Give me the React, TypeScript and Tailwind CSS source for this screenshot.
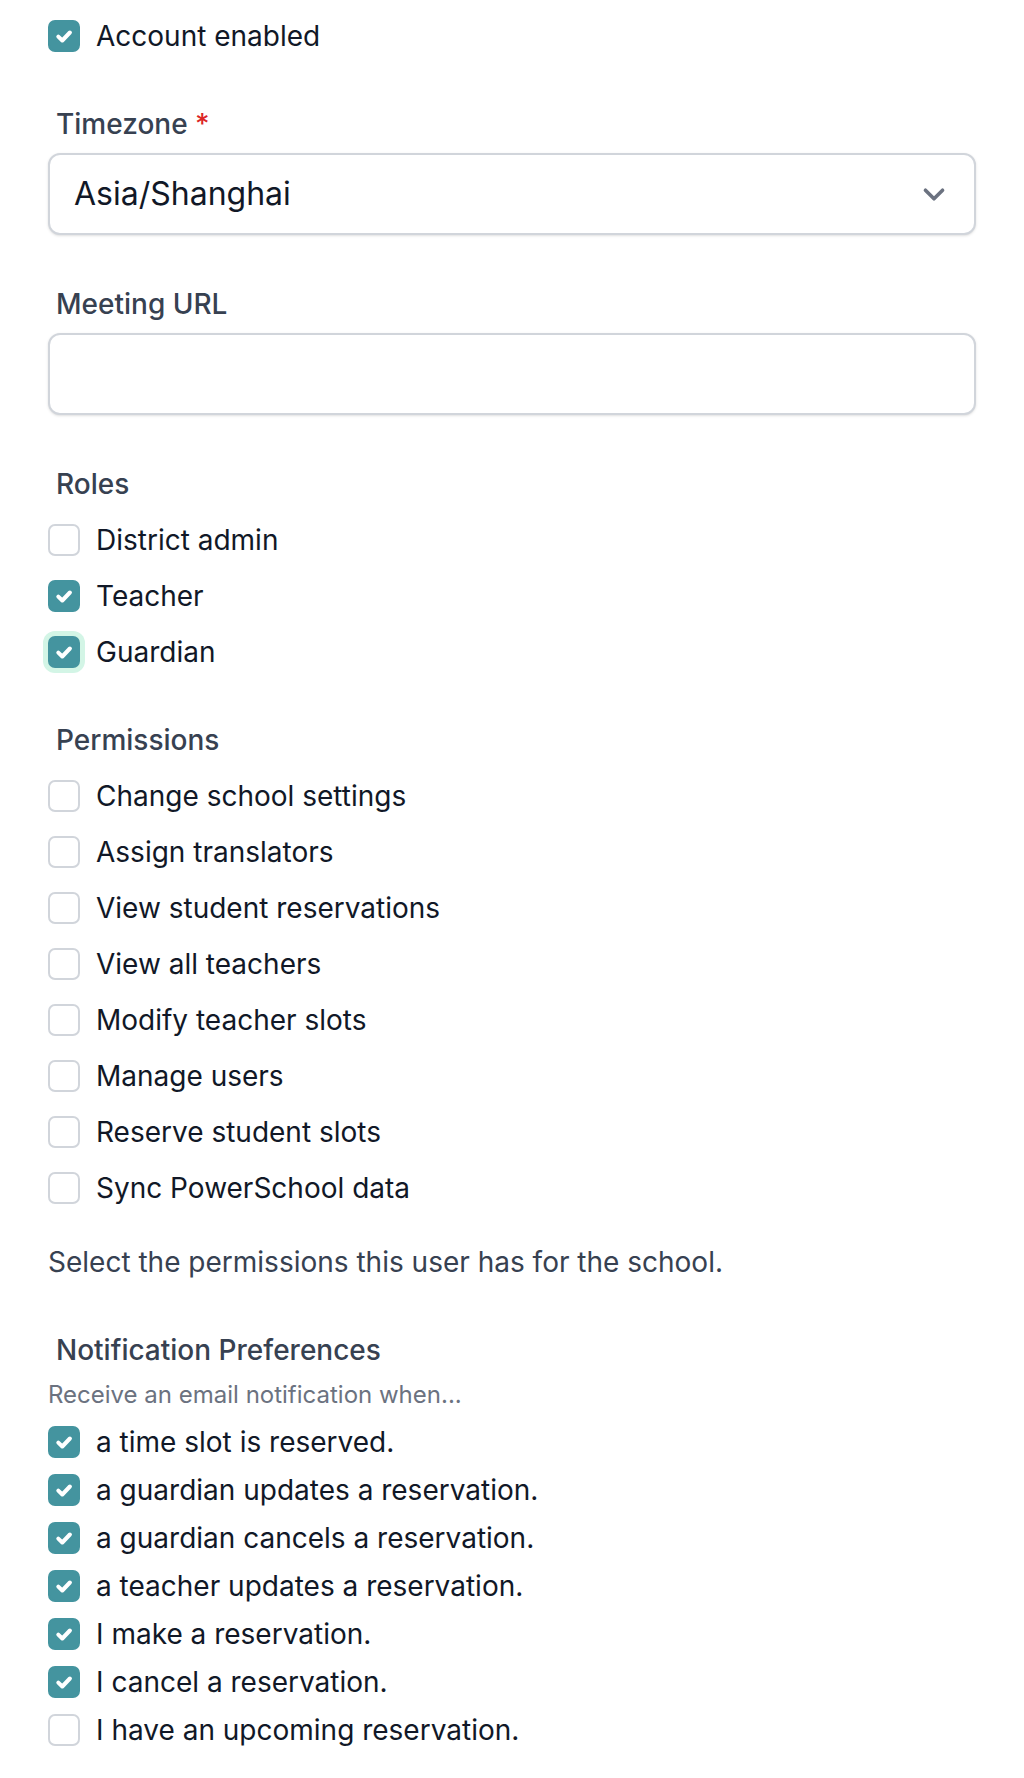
import React, { useState } from 'react';

const teal = 'bg-[#44949f] border-[#44949f]';

// check mark drawn inside the 28px content box of the checkbox
const Check = () => (
  <svg viewBox="0 0 28 28" className="w-7 h-7 shrink-0" fill="none" stroke="white" strokeWidth="4" strokeLinecap="round" strokeLinejoin="round">
    <path d="M8.3 14.6l4 3.9 7.6-8" />
  </svg>
);

interface BoxProps {
  checked: boolean;
  focused?: boolean;
  onToggle: () => void;
}

const Box = ({ checked, focused, onToggle }: BoxProps) => (
  <button
    type="button"
    onClick={onToggle}
    className={`w-8 h-8 shrink-0 rounded-[7px] border-2 flex items-center justify-center ${
      checked ? teal : 'bg-white border-[#d1d5db]'
    } ${focused ? 'ring-[5px] ring-[#d3f5e6] border-[#5eaeb8]' : ''}`}
  >
    {checked && <Check />}
  </button>
);

interface RowProps {
  label: string;
  checked: boolean;
  focused?: boolean;
  onToggle: () => void;
}

const CheckRow = ({ label, checked, focused, onToggle }: RowProps) => (
  <label className="flex items-center h-10 gap-4 cursor-pointer">
    <Box checked={checked} focused={focused} onToggle={onToggle} />
    <span className="text-[28px] leading-10 text-[#111827]">{label}</span>
  </label>
);

const SectionLabel = ({ children, className = '' }: { children: React.ReactNode; className?: string }) => (
  <div className={`pl-2 text-[28px] leading-10 font-medium text-[#374151] ${className}`}>{children}</div>
);

const roleList = ['District admin', 'Teacher', 'Guardian'];
const permissionList = [
  'Change school settings',
  'Assign translators',
  'View student reservations',
  'View all teachers',
  'Modify teacher slots',
  'Manage users',
  'Reserve student slots',
  'Sync PowerSchool data',
];
const notifyList = [
  'a time slot is reserved.',
  'a guardian updates a reservation.',
  'a guardian cancels a reservation.',
  'a teacher updates a reservation.',
  'I make a reservation.',
  'I cancel a reservation.',
  'I have an upcoming reservation.',
];

export default function App() {
  const [enabled, setEnabled] = useState(true);
  const [roles, setRoles] = useState<boolean[]>([false, true, true]);
  const [perms, setPerms] = useState<boolean[]>(permissionList.map(() => false));
  const [notify, setNotify] = useState<boolean[]>([true, true, true, true, true, true, false]);

  const flip = (arr: boolean[], set: (v: boolean[]) => void, i: number) =>
    set(arr.map((v, j) => (j === i ? !v : v)));

  return (
    <div className="w-[1024px] min-h-[1778px] bg-white px-12 pt-4 font-['Inter',sans-serif]">
      <CheckRow label="Account enabled" checked={enabled} onToggle={() => setEnabled(!enabled)} />

      {/* Timezone */}
      <SectionLabel className="mt-12">
        Timezone <span className="text-[#dc2626]">*</span>
      </SectionLabel>
      <div className="mt-[9px] h-[82px] w-full rounded-[12px] border-2 border-[#d1d5db] bg-white shadow-sm flex items-center justify-between pl-6 pr-[21px]">
        <span className="text-[32px] text-[#111827]">Asia/Shanghai</span>
        <svg viewBox="0 0 20 20" className="w-[38px] h-[38px] text-[#6b7280]" fill="none" stroke="currentColor" strokeWidth="1.9" strokeLinecap="round" strokeLinejoin="round">
          <path d="M5.5 8l4.5 4.5L14.5 8" />
        </svg>
      </div>

      {/* Meeting URL */}
      <SectionLabel className="mt-[49px]">Meeting URL</SectionLabel>
      <input
        type="text"
        className="mt-[9px] block h-[82px] w-full rounded-[12px] border-2 border-[#d1d5db] bg-white shadow-sm px-6 text-[32px] outline-none"
      />

      {/* Roles */}
      <SectionLabel className="mt-[49px]">Roles</SectionLabel>
      <div className="mt-4 flex flex-col gap-4">
        {roleList.map((r, i) => (
          <CheckRow key={r} label={r} checked={roles[i]} focused={i === 2} onToggle={() => flip(roles, setRoles, i)} />
        ))}
      </div>

      {/* Permissions */}
      <SectionLabel className="mt-12">Permissions</SectionLabel>
      <div className="mt-4 flex flex-col gap-4">
        {permissionList.map((p, i) => (
          <CheckRow key={p} label={p} checked={perms[i]} onToggle={() => flip(perms, setPerms, i)} />
        ))}
      </div>
      <p className="mt-[34px] text-[28px] leading-10 text-[#374151]">Select the permissions this user has for the school.</p>

      {/* Notification preferences */}
      <SectionLabel className="mt-[48px]">Notification Preferences</SectionLabel>
      <p className="mt-[9px] text-[24px] leading-8 text-[#6b7280]">Receive an email notification when...</p>
      <div className="mt-[11px] flex flex-col gap-2 pb-7">
        {notifyList.map((n, i) => (
          <CheckRow key={n} label={n} checked={notify[i]} onToggle={() => flip(notify, setNotify, i)} />
        ))}
      </div>
    </div>
  );
}
